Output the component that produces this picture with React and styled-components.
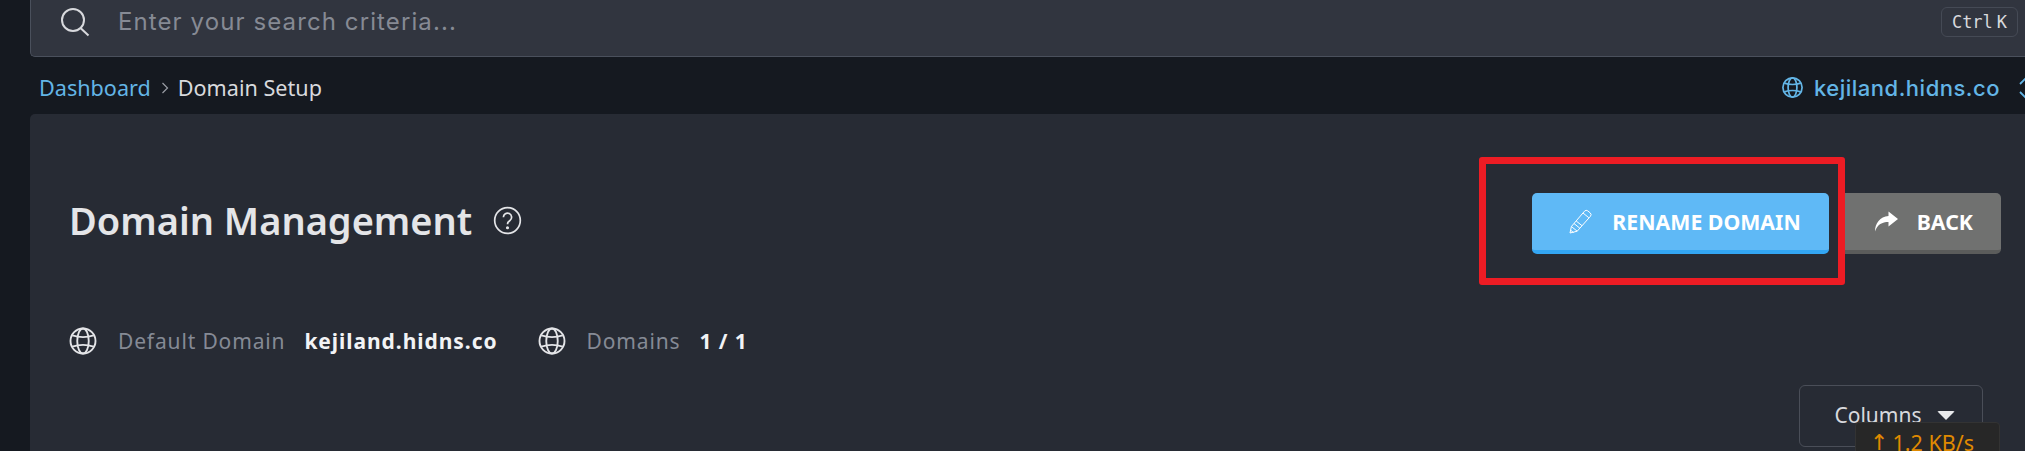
import React from 'react';
import styled, { createGlobalStyle } from 'styled-components';

const GlobalStyle = createGlobalStyle`
  html, body {
    margin: 0;
    padding: 0;
    width: 2025px;
    height: 451px;
    overflow: hidden;
    background: #151920;
    font-family: "Noto Sans", sans-serif;
  }
  * { box-sizing: border-box; }
`;

const Page = styled.div`
  position: relative;
  width: 2025px;
  height: 451px;
  display: flex;
  overflow: hidden;
`;

const Rail = styled.div`
  width: 30px;
  flex: none;
  background: #151920;
`;

const Main = styled.div`
  flex: 1;
  min-width: 0;
  display: flex;
  flex-direction: column;
`;

const SearchBar = styled.div`
  height: 57px;
  display: flex;
  align-items: center;
  padding: 0 7px 13px 29px;
  background: #31353f;
  border: 1px solid #4a505c;
  border-width: 0 0 1px 1px;
  border-bottom-left-radius: 5px;
`;

const SearchIcon = styled.svg`
  width: 30px;
  height: 30px;
  flex: none;
  color: #d8d9dd;
`;

const SearchText = styled.div`
  flex: 1;
  margin-left: 28px;
  font-family: Inter, "Noto Sans", sans-serif;
  font-size: 24px;
  letter-spacing: 1.1px;
  color: #868a94;
`;

const Kbd = styled.div`
  width: 77px;
  height: 30px;
  display: flex;
  align-items: center;
  justify-content: center;
  gap: 4px;
  border: 1px solid #454a55;
  border-radius: 6px;
  font-family: "DejaVu Sans Mono", monospace;
  font-size: 17px;
  color: #d8d9dd;
`;

const Crumbs = styled.div`
  height: 57px;
  display: flex;
  align-items: center;
  padding: 4px 0 0 9px;
  font-size: 21.6px;
  color: #d8d9dd;
`;

const CrumbLink = styled.span`
  color: #63b5e6;
`;

const CrumbSep = styled.svg`
  width: 12px;
  height: 12px;
  margin: 0 7px 0 8px;
  color: #9a9da5;
`;

const Site = styled.div`
  margin-left: auto;
  margin-right: -11px;
  display: flex;
  align-items: center;
  gap: 10px;
  font-family: Inter, "Noto Sans", sans-serif;
  font-size: 22px;
  font-weight: 500;
  letter-spacing: 0.5px;
  color: #63b5e6;
`;

const ChevronIcon = styled.svg`
  margin-left: 4px;
`;

const Panel = styled.div`
  flex: 1;
  background: #272b34;
  border-radius: 5px 0 0 0;
  padding: 0 42px 0 39px;
`;

const HeaderRow = styled.div`
  height: 212px;
  display: flex;
  align-items: center;
  justify-content: space-between;
`;

const TitleGroup = styled.div`
  display: flex;
  align-items: center;
  gap: 21px;
`;

const Title = styled.h1`
  margin: 0;
  font-size: 38px;
  font-weight: 600;
  color: #e4e5e8;
`;

const Actions = styled.div`
  display: flex;
  gap: 9px;
  margin-right: -18px;
  margin-top: 7px;
`;

const ActionButton = styled.button`
  height: 61px;
  display: flex;
  align-items: center;
  gap: 19px;
  padding: 0 28px 0 36px;
  border: 0;
  border-bottom: 4px solid ${(p) => p.$edge};
  border-radius: 5px;
  background: ${(p) => p.$fill};
  color: #fff;
  font-family: "Noto Sans", sans-serif;
  font-size: 21.3px;
  font-weight: 700;
`;

const Stats = styled.div`
  display: flex;
  align-items: center;
  margin-left: -1px;
`;

const StatIcon = styled.svg`
  width: 30px;
  height: 30px;
  color: #e4e5e8;
`;

const StatLabel = styled.span`
  margin-left: 20px;
  font-size: 21px;
  letter-spacing: 0.85px;
  color: #858a95;
`;

const StatValue = styled.span`
  margin-left: 19px;
  margin-right: 39px;
  font-size: 21px;
  font-weight: 700;
  letter-spacing: 0.95px;
  color: #f2f3f5;
`;

const ColumnsRow = styled.div`
  display: flex;
  justify-content: flex-end;
  margin-top: 29px;
`;

const ColumnsButton = styled.div`
  width: 184px;
  height: 62px;
  display: flex;
  align-items: center;
  justify-content: center;
  gap: 15px;
  padding: 0 0 2px 7px;
  border: 1px solid #4a4e58;
  border-radius: 6px;
  font-size: 21px;
  color: #d8d9dd;
`;

const Caret = styled.span`
  width: 0;
  height: 0;
  border-left: 9px solid transparent;
  border-right: 9px solid transparent;
  border-top: 9px solid #e8e9eb;
  border-radius: 2px;
`;

const Speed = styled.div`
  position: absolute;
  left: 1855px;
  top: 422px;
  width: 145px;
  height: 40px;
  display: flex;
  gap: 4px;
  padding: 5px 0 0 14px;
  background: #272727;
  border: 1px solid #333;
  border-radius: 4px;
  font-size: 21.5px;
  color: #e08a00;
`;

const SpeedArrow = styled.span`
  font-family: "DejaVu Sans", sans-serif;
  font-size: 22px;
  line-height: 29px;
`;

// the hand-drawn highlight on the screenshot
const Highlight = styled.div`
  position: absolute;
  left: 1479px;
  top: 157px;
  width: 366px;
  height: 128px;
  border: 7px solid #ed1c24;
  border-radius: 3px;
  pointer-events: none;
`;

function Globe() {
  return (
    <>
      <circle cx="12" cy="12" r="10" />
      <ellipse cx="12" cy="12" rx="4.6" ry="10" />
      <path d="M3.4 7.5c5 1.6 12.2 1.6 17.2 0M3.4 16.5c5-1.6 12.2-1.6 17.2 0" />
    </>
  );
}

export default function App() {
  return (
    <Page>
      <GlobalStyle />
      <Rail />
      <Main>
        <SearchBar>
          <SearchIcon viewBox="0 0 30 30" fill="none" stroke="currentColor" strokeWidth="2">
            <circle cx="13" cy="13" r="11" />
            <path d="M20.5 21l8 7.5" />
          </SearchIcon>
          <SearchText>Enter your search criteria...</SearchText>
          <Kbd>
            <span>Ctrl</span>
            <span>K</span>
          </Kbd>
        </SearchBar>
        <Crumbs>
          <CrumbLink>Dashboard</CrumbLink>
          <CrumbSep viewBox="0 0 12 12" fill="none" stroke="currentColor" strokeWidth="1.2">
            <path d="M3.5 1l5 5-5 5" />
          </CrumbSep>
          Domain Setup
          <Site>
            <svg width="23" height="23" viewBox="0 0 24 24" fill="none" stroke="currentColor" strokeWidth="1.8">
              <Globe />
            </svg>
            kejiland.hidns.co
            <ChevronIcon width="22" height="28" viewBox="0 0 22 28" fill="none" stroke="currentColor" strokeWidth="1.8">
              <path d="M6 10l6-6 6 6M6 18l6 6 6-6" />
            </ChevronIcon>
          </Site>
        </Crumbs>
        <Panel>
          <HeaderRow>
            <TitleGroup>
              <Title>Domain Management</Title>
              <svg width="29" height="29" viewBox="0 0 24 24" fill="none" stroke="#e4e5e8" strokeWidth="1.4">
                <circle cx="12" cy="12" r="10.6" />
                <path d="M8.6 9.3a3.4 3.4 0 1 1 5.4 2.7c-1.2.8-2 1.5-2 3" />
                <circle cx="12" cy="18" r=".6" fill="#e4e5e8" />
              </svg>
            </TitleGroup>
            <Actions>
              <ActionButton $fill="#5fb9f6" $edge="#33a6f3">
                <svg width="25" height="25" viewBox="0 0 23 25" fill="none" stroke="#fff" strokeWidth="1" strokeLinejoin="round">
                  <path d="M1 24l1.4-6.5L15.5 2.2a2.4 2.4 0 0 1 3.3-.3l2.4 2a2.4 2.4 0 0 1 .3 3.3L8.2 22.2z" />
                  <path d="M2.4 17.5l5.8 4.7M5 14.5l5.8 4.7M7.2 12l5.8 4.7M14 4l5.8 4.7M1.6 21.2l3 2.4" />
                </svg>
                RENAME DOMAIN
              </ActionButton>
              <ActionButton $fill="#707170" $edge="#5b5c5b">
                <svg width="24" height="21" viewBox="0 0 24 20" fill="#fff">
                  <path d="M14.5 0L24 7.5 14.5 15v-4.4C8 10.6 3.6 13 1 20 1 12 6 5.4 14.5 4.6z" />
                </svg>
                BACK
              </ActionButton>
            </Actions>
          </HeaderRow>
          <Stats>
            <StatIcon viewBox="0 0 24 24" fill="none" stroke="currentColor" strokeWidth="1.5">
              <Globe />
            </StatIcon>
            <StatLabel>Default Domain</StatLabel>
            <StatValue>kejiland.hidns.co</StatValue>
            <StatIcon viewBox="0 0 24 24" fill="none" stroke="currentColor" strokeWidth="1.5">
              <Globe />
            </StatIcon>
            <StatLabel>Domains</StatLabel>
            <StatValue>1 / 1</StatValue>
          </Stats>
          <ColumnsRow>
            <ColumnsButton>
              Columns
              <Caret />
            </ColumnsButton>
          </ColumnsRow>
        </Panel>
      </Main>
      <Highlight />
      <Speed>
        <SpeedArrow>↑</SpeedArrow>
        1.2 KB/s
      </Speed>
    </Page>
  );
}
